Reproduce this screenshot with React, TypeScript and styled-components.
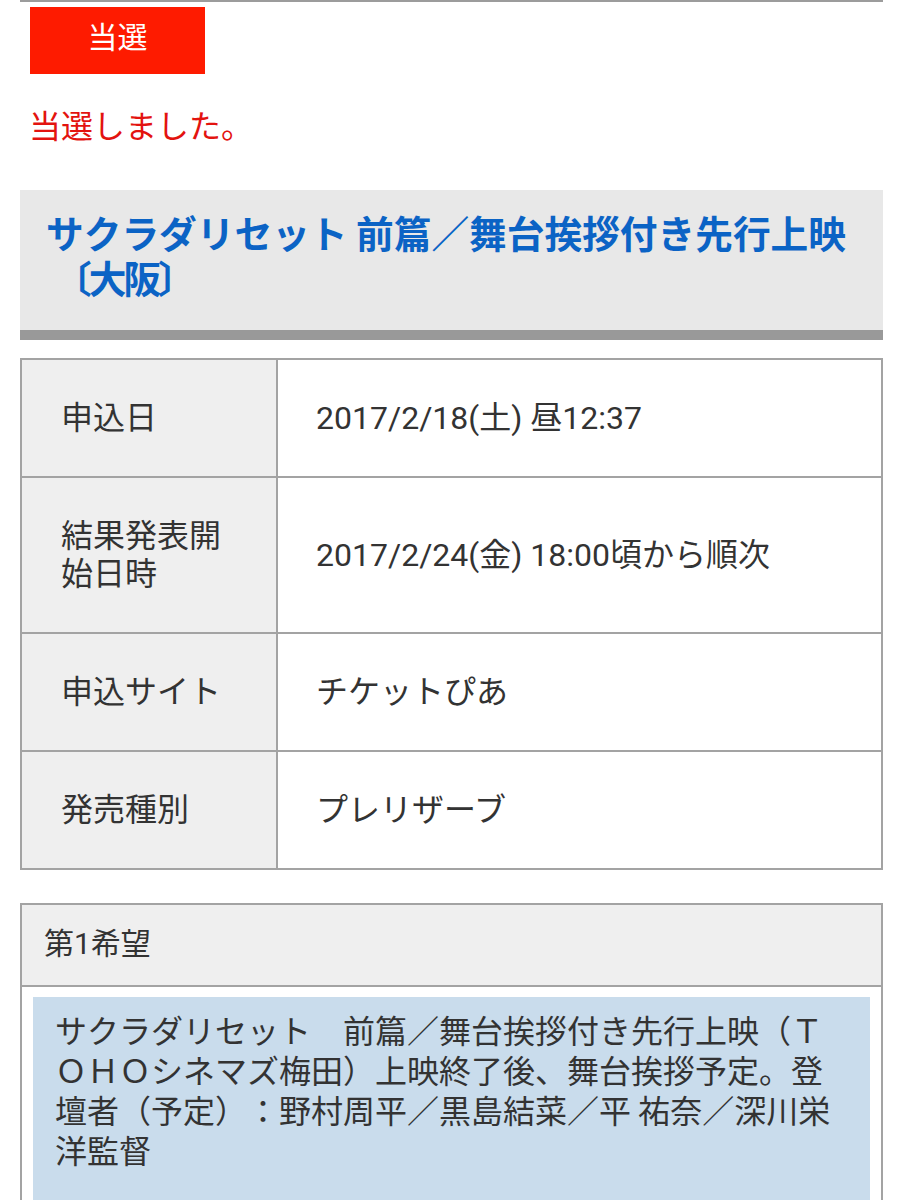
import React from "react";
import styled, { createGlobalStyle } from "styled-components";

const GlobalStyle = createGlobalStyle`
  html, body {
    margin: 0;
    padding: 0;
    background: #ffffff;
  }
  body {
    font-family: Roboto, "Noto Sans CJK JP", "Noto Sans", sans-serif;
    color: #333333;
    text-spacing-trim: space-all;
  }
  * { box-sizing: border-box; }
`;

const Page = styled.div`
  padding: 0 20px;
  width: 903px;
`;

const TopRule = styled.div`
  height: 2px;
  background: #9c9c9c;
`;

const ResultBadge = styled.div`
  margin: 5px 0 0 10px;
  width: 175px;
  height: 67px;
  background: #fe1b00;
  color: #ffffff;
  font-size: 30px;
  line-height: 1;
  display: flex;
  align-items: center;
  justify-content: center;
  padding-bottom: 6px;
`;

const ResultMessage = styled.p`
  margin: 34px 0 0 9px;
  font-size: 32px;
  line-height: 38px;
  color: #e3130f;
`;

const TitlePanel = styled.div`
  margin-top: 44px;
  background: #e8e8e8;
  border-bottom: 10px solid #999999;
  padding: 19px 26px 31px 26px;
  min-height: 150px;
`;

const Title = styled.h1`
  margin: 0;
  font-size: 37.7px;
  line-height: 45px;
  font-weight: 700;
  color: #0b63c5;
  font-family: "Noto Sans CJK JP", sans-serif;
  text-spacing-trim: space-all;
`;

const TitleLine = styled.span<{ $indent?: number; $spacing?: number }>`
  display: block;
  margin-left: ${(p) => p.$indent ?? 0}px;
  letter-spacing: ${(p) => (p.$spacing !== undefined ? `${p.$spacing}px` : "normal")};
`;

const InfoGrid = styled.div`
  margin-top: 18px;
  display: grid;
  grid-template-columns: 256px 1fr;
  border-top: 2px solid #a3a3a3;
  border-left: 2px solid #a3a3a3;
`;

const Cell = styled.div<{ $label?: boolean }>`
  display: flex;
  align-items: center;
  padding: 39px ${(p) => (p.$label ? "39px" : "38px")};
  background: ${(p) => (p.$label ? "#efefef" : "#ffffff")};
  border-right: 2px solid #a3a3a3;
  border-bottom: 2px solid #a3a3a3;
  font-size: 32px;
  line-height: 38px;
  color: #333333;
`;

const ChoiceBox = styled.div`
  margin-top: 33px;
  border: 2px solid #a3a3a3;
`;

const ChoiceHeader = styled.div`
  background: #efefef;
  border-bottom: 2px solid #a3a3a3;
  padding: 20px 22px 22px;
  font-size: 30px;
  line-height: 38px;
  color: #333333;
`;

const ChoiceBody = styled.div`
  padding: 10px 11px 20px;
`;

const ChoiceDetail = styled.div`
  background: #c9dcec;
  padding: 12px 22px 45px;
  font-size: 32px;
  line-height: 40px;
  color: #333333;
  font-family: "Noto Sans CJK JP", sans-serif;
  text-spacing-trim: space-all;
`;

const rows: { label: string; value: string }[] = [
  { label: "申込日", value: "2017/2/18(土) 昼12:37" },
  { label: "結果発表開始日時", value: "2017/2/24(金) 18:00頃から順次" },
  { label: "申込サイト", value: "チケットぴあ" },
  { label: "発売種別", value: "プレリザーブ" },
];

export default function App() {
  return (
    <>
      <GlobalStyle />
      <Page>
        <TopRule />
        <ResultBadge>当選</ResultBadge>
        <ResultMessage>当選しました。</ResultMessage>
        <TitlePanel>
          <Title>
            <TitleLine>サクラダリセット 前篇／舞台挨拶付き先行上映</TitleLine>
            <TitleLine $indent={8} $spacing={-3}>
              〔大阪〕
            </TitleLine>
          </Title>
        </TitlePanel>
        <InfoGrid>
          {rows.map((r) => (
            <React.Fragment key={r.label}>
              <Cell $label>{r.label}</Cell>
              <Cell>{r.value}</Cell>
            </React.Fragment>
          ))}
        </InfoGrid>
        <ChoiceBox>
          <ChoiceHeader>第1希望</ChoiceHeader>
          <ChoiceBody>
            <ChoiceDetail>
              サクラダリセット　前篇／舞台挨拶付き先行上映（ＴＯＨＯシネマズ梅田）上映終了後、舞台挨拶予定。登壇者（予定）：野村周平／黒島結菜／平 祐奈／深川栄洋監督
            </ChoiceDetail>
          </ChoiceBody>
        </ChoiceBox>
      </Page>
    </>
  );
}
